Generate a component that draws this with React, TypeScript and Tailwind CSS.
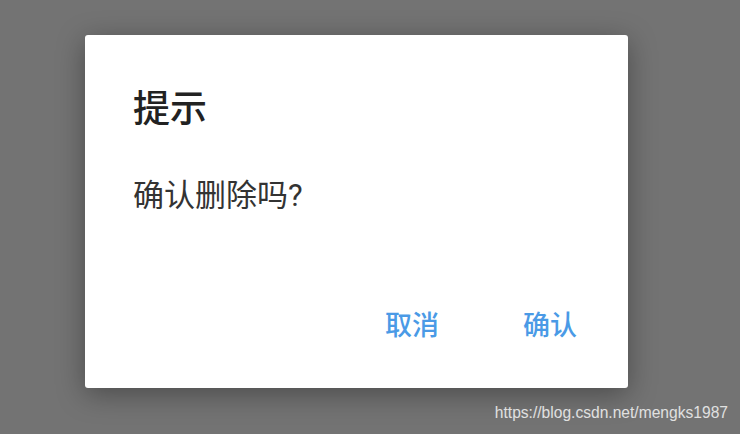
import React from "react";

export default function App() {
  const cjk = { fontFamily: '"Noto Sans CJK SC", "Noto Sans", sans-serif' };
  return (
    <div className="relative w-[740px] h-[434px] bg-[#737373] overflow-hidden" style={cjk}>
      <div className="pt-[35px] pl-[85px]">
        <div className="w-[543px] h-[353px] bg-white rounded-[3px] shadow-[0_6px_28px_rgba(0,0,0,0.35)] flex flex-col">
          <div className="pl-[48px] pt-[47px] text-[37px] leading-[48px] font-medium text-[#222]">提示</div>
          <div className="pl-[48px] pt-[43px] text-[31px] leading-[40px] text-[#333]">
            确认删除吗<span style={{ fontFamily: 'Roboto, "Noto Sans", sans-serif' }}>?</span>
          </div>
          <div className="mt-auto mb-[47px] flex justify-end gap-[84px] pr-[51px] text-[27px] leading-[34px] font-medium text-[#4a9ae6]">
            <span>取消</span>
            <span>确认</span>
          </div>
        </div>
      </div>
      <div
        className="absolute right-[12px] bottom-[10px] text-[15.6px] leading-[22px] text-[#e0e0e0]"
        style={{ fontFamily: '"Liberation Sans", Arial, sans-serif' }}
      >
        https://blog.csdn.net/mengks1987
      </div>
    </div>
  );
}
